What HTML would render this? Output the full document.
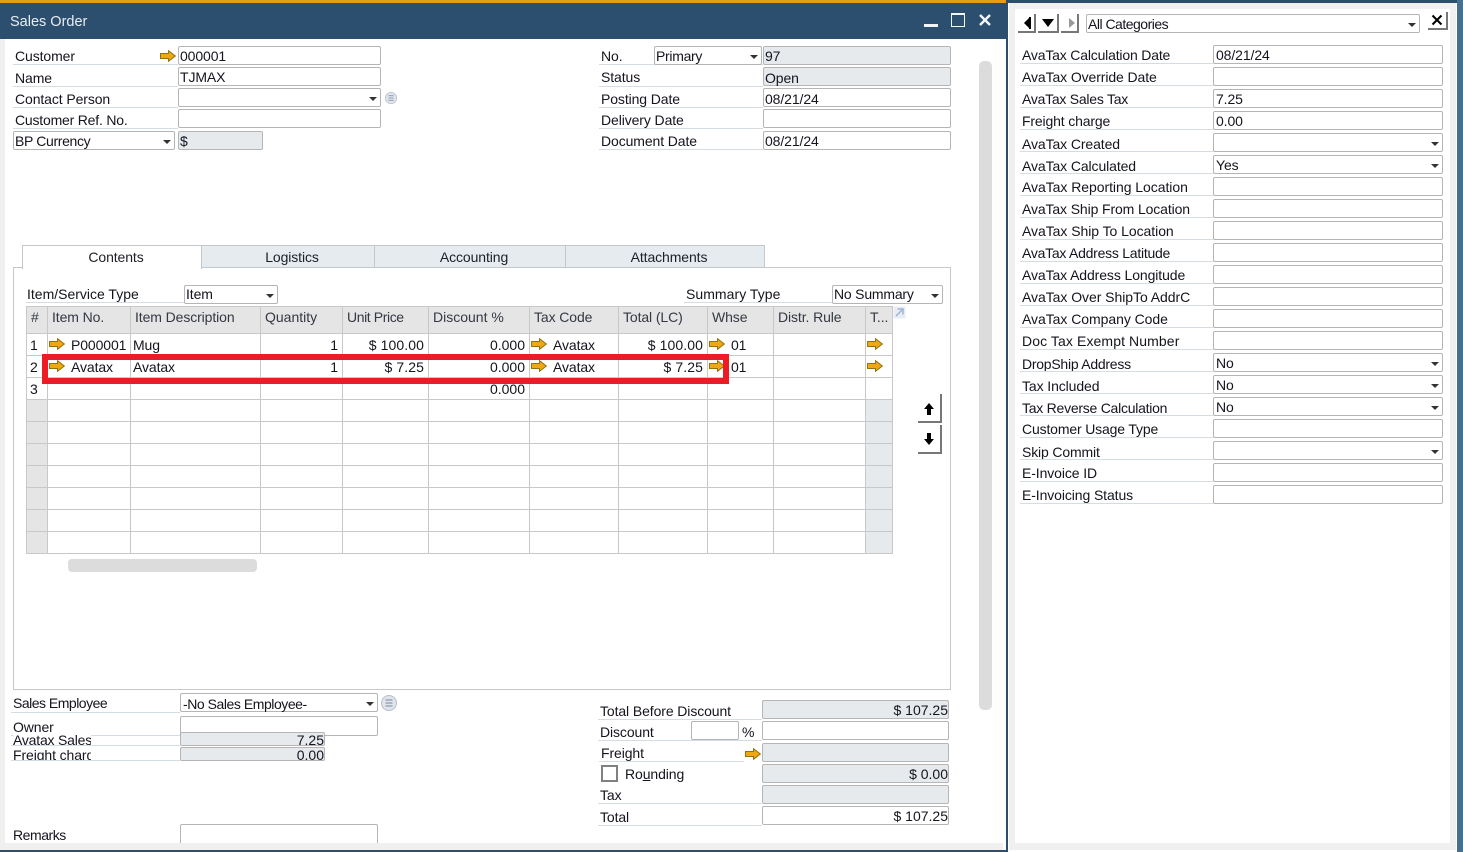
<!DOCTYPE html>
<html><head><meta charset="utf-8"><title>Sales Order</title>
<style>
html,body{margin:0;padding:0;width:1463px;height:852px;overflow:hidden;background:#fff}
body{position:relative;font:14px/16px "Liberation Sans",sans-serif;color:#14141e;letter-spacing:-.1px}
div,svg{position:absolute}
.t{white-space:nowrap}
.r{text-align:right;letter-spacing:0}
.f{border:1px solid #b5b5b5;border-radius:2px;box-sizing:border-box;background:#fff;height:19px;white-space:nowrap;padding:0 0 0 1px;line-height:18px}
.p{padding-left:2px}
.g{background:#e6eaed}
.ln{height:1px;background:#d5dde2}
.h{color:#333842;top:309px}
.dd:after{content:"";position:absolute;right:3px;top:8px;border:4px solid transparent;border-top:4px solid #333;border-bottom:0}
.v{width:1px;background:#c8c8c8;top:306px;height:248px}
.hl{height:1px;background:#c8c8c8;left:26px;width:867px}
.tab{top:245px;height:23px;box-sizing:border-box;border:1px solid #c4c8cc;border-left:0;background:#e6ebef;text-align:center;line-height:23px;color:#1e1e26;padding-left:8px}
.btn{background:#fff;border-right:2px solid #777;border-bottom:2px solid #777;box-sizing:border-box}
</style></head><body>
<svg width="0" height="0" style="left:0;top:0"><defs><symbol id="a" viewBox="0 0 16 12"><path d="M.5 3.500h8V.7L15.300 6 8.500 11.300V8.500H.5z" fill="#efa814" stroke="#94700f" stroke-width="1"/></symbol>
<symbol id="i" viewBox="0 0 16 16"><circle cx="8" cy="8" r="7.500" fill="#dfe5ee" stroke="#b8bec8"/><path d="M4.500 5h7M4.500 8h7M4.500 11h7" stroke="#7f8794" stroke-width="1"/></symbol></defs></svg>

<!-- chrome -->
<div style="left:0;top:0;width:1008px;height:852px;background:#f0f0f0"></div>
<div style="left:5px;top:39px;width:998px;height:804px;background:#fff"></div>
<div style="left:0;top:0;width:1008px;height:3px;background:#e2a010"></div>
<div style="left:0;top:3px;width:1008px;height:36px;background:#2d4f6f"></div>
<div class="t" style="left:10px;top:14px;color:#e8edf2;font-size:14.500px;letter-spacing:0;line-height:17px">Sales Order</div>
<div style="left:924px;top:24px;width:14px;height:3px;background:#f2f5f7"></div>
<div style="left:951px;top:13px;width:14px;height:14px;border:1px solid #f2f5f7;border-top-width:2px;box-sizing:border-box"></div>
<svg style="left:978px;top:13px" width="14" height="14" viewBox="0 0 14 14"><path d="M2 2l10 10M12 2L2 12" stroke="#f2f5f7" stroke-width="2.400"/></svg>
<div style="left:1003px;top:39px;width:3px;height:813px;background:#fff"></div>
<div style="left:1006px;top:0;width:2px;height:852px;background:#2d4f6f"></div>
<div style="left:0;top:850px;width:1008px;height:2px;background:#2d4f6f"></div>
<div style="left:979px;top:61px;width:13px;height:649px;background:#dcdcdc;border-radius:5px"></div>

<!-- top left header -->
<div class="t" style="left:15px;top:48px">Customer</div><div class="ln" style="left:13px;top:64px;width:165px"></div>
<svg style="left:160px;top:50px" width="16" height="12"><use href="#a"/></svg>
<div class="f" style="left:178px;top:46px;width:203px">000001</div>
<div class="t" style="left:15px;top:70px">Name</div><div class="ln" style="left:13px;top:86px;width:165px"></div>
<div class="f" style="left:178px;top:67px;width:203px">TJMAX</div>
<div class="t" style="left:15px;top:91px">Contact Person</div><div class="ln" style="left:13px;top:107px;width:165px"></div>
<div class="f dd" style="left:178px;top:88px;width:203px"></div>
<svg style="left:385px;top:92px" width="12" height="12"><use href="#i"/></svg>
<div class="t" style="left:15px;top:112px;letter-spacing:-.2px">Customer Ref. No.</div><div class="ln" style="left:13px;top:128px;width:165px"></div>
<div class="f" style="left:178px;top:109px;width:203px"></div>
<div class="f dd" style="left:13px;top:131px;width:162px;letter-spacing:-.35px">BP Currency</div>
<div class="f g" style="left:178px;top:131px;width:85px">$</div>

<div class="t" style="left:601px;top:48px">No.</div><div class="ln" style="left:599px;top:64px;width:164px"></div>
<div class="f dd" style="left:654px;top:46px;width:108px;letter-spacing:-.3px">Primary</div>
<div class="f g" style="left:763px;top:46px;width:188px">97</div>
<div class="t" style="left:601px;top:69px">Status</div><div class="ln" style="left:599px;top:86px;width:164px"></div>
<div class="f g" style="left:763px;top:67px;width:188px;line-height:20px">Open</div>
<div class="t" style="left:601px;top:91px">Posting Date</div><div class="ln" style="left:599px;top:107px;width:164px"></div>
<div class="f" style="left:763px;top:88px;width:188px;line-height:20px">08/21/24</div>
<div class="t" style="left:601px;top:112px">Delivery Date</div><div class="ln" style="left:599px;top:128px;width:164px"></div>
<div class="f" style="left:763px;top:109px;width:188px"></div>
<div class="t" style="left:601px;top:133px">Document Date</div><div class="ln" style="left:599px;top:149px;width:164px"></div>
<div class="f" style="left:763px;top:131px;width:188px">08/21/24</div>

<!-- tab panel -->
<div style="left:13px;top:267px;width:938px;height:423px;border:1px solid #c8c8c8;box-sizing:border-box"></div>
<div class="tab" style="left:22px;width:180px;background:#fff;border-left:1px solid #c4c8cc;border-bottom:0;height:24px">Contents</div>
<div class="tab" style="left:202px;width:173px">Logistics</div>
<div class="tab" style="left:375px;width:191px">Accounting</div>
<div class="tab" style="left:566px;width:199px">Attachments</div>

<div class="t" style="left:27px;top:286px;letter-spacing:0">Item/Service Type</div><div class="ln" style="left:26px;top:302px;width:158px"></div>
<div class="f dd" style="left:184px;top:285px;width:94px;line-height:16px">Item</div>
<div class="t" style="left:686px;top:286px;letter-spacing:.05px">Summary Type</div><div class="ln" style="left:684px;top:302px;width:148px"></div>
<div class="f dd" style="left:832px;top:285px;width:111px;line-height:17px;letter-spacing:-.2px">No Summary</div>

<!-- grid -->
<div style="left:26px;top:306px;width:867px;height:27px;background:#e5e5e5"></div>
<div style="left:27px;top:400px;width:20px;height:153px;background:#e5e5e5"></div>
<div style="left:866px;top:400px;width:26px;height:153px;background:#e6eaed"></div>
<div class="hl" style="top:306px"></div><div class="hl" style="top:333px"></div><div class="hl" style="top:355px"></div><div class="hl" style="top:377px"></div><div class="hl" style="top:399px"></div><div class="hl" style="top:421px"></div><div class="hl" style="top:443px"></div><div class="hl" style="top:465px"></div><div class="hl" style="top:487px"></div><div class="hl" style="top:509px"></div><div class="hl" style="top:531px"></div><div class="hl" style="top:553px"></div>
<div class="v" style="left:26px"></div><div class="v" style="left:47px"></div><div class="v" style="left:130px"></div><div class="v" style="left:260px"></div><div class="v" style="left:342px"></div><div class="v" style="left:428px"></div><div class="v" style="left:529px"></div><div class="v" style="left:618px"></div><div class="v" style="left:707px"></div><div class="v" style="left:773px"></div><div class="v" style="left:865px"></div><div class="v" style="left:892px"></div>

<div class="t h" style="left:31px">#</div><div class="t h" style="left:52px">Item No.</div><div class="t h" style="left:135px">Item Description</div><div class="t h" style="left:265px;letter-spacing:0">Quantity</div><div class="t h" style="left:347px;letter-spacing:-.4px">Unit Price</div><div class="t h" style="left:433px;letter-spacing:0">Discount %</div><div class="t h" style="left:534px">Tax Code</div><div class="t h" style="left:623px">Total (LC)</div><div class="t h" style="left:712px">Whse</div><div class="t h" style="left:778px">Distr. Rule</div><div class="t h" style="left:870px">T...</div>
<svg style="left:893px;top:306px" width="13" height="13" viewBox="0 0 13 13"><rect x=".5" y=".5" width="12" height="12" fill="#e8edf4"/><path d="M3 10l6-6M4.500 3H10v5.500" stroke="#9fb4d4" stroke-width="1.500" fill="none"/></svg>

<div class="t" style="left:30px;top:337px">1</div>
<svg style="left:49px;top:338px" width="16" height="12"><use href="#a"/></svg>
<div class="t" style="left:71px;top:337px">P000001</div><div class="t" style="left:133px;top:337px">Mug</div>
<div class="t r" style="left:262px;width:76px;top:337px">1</div><div class="t r" style="left:344px;width:80px;top:337px;letter-spacing:.1px">$ 100.00</div><div class="t r" style="left:430px;width:95px;top:337px">0.000</div>
<svg style="left:531px;top:338px" width="16" height="12"><use href="#a"/></svg><div class="t" style="left:553px;top:337px">Avatax</div>
<div class="t r" style="left:620px;width:83px;top:337px;letter-spacing:.1px">$ 100.00</div>
<svg style="left:709px;top:338px" width="16" height="12"><use href="#a"/></svg><div class="t" style="left:731px;top:337px">01</div>
<svg style="left:867px;top:338px" width="16" height="12"><use href="#a"/></svg>

<div class="t" style="left:30px;top:359px">2</div>
<svg style="left:49px;top:360px" width="16" height="12"><use href="#a"/></svg>
<div class="t" style="left:71px;top:359px">Avatax</div><div class="t" style="left:133px;top:359px">Avatax</div>
<div class="t r" style="left:262px;width:76px;top:359px">1</div><div class="t r" style="left:344px;width:80px;top:359px;letter-spacing:.1px">$ 7.25</div><div class="t r" style="left:430px;width:95px;top:359px">0.000</div>
<svg style="left:531px;top:360px" width="16" height="12"><use href="#a"/></svg><div class="t" style="left:553px;top:359px">Avatax</div>
<div class="t r" style="left:620px;width:83px;top:359px;letter-spacing:.1px">$ 7.25</div>
<svg style="left:709px;top:360px" width="16" height="12"><use href="#a"/></svg><div class="t" style="left:731px;top:359px">01</div>
<svg style="left:867px;top:360px" width="16" height="12"><use href="#a"/></svg>

<div class="t" style="left:30px;top:381px">3</div><div class="t r" style="left:430px;width:95px;top:381px">0.000</div>

<div style="left:42px;top:354px;width:687px;height:30px;border:6px solid #ed1c24;box-sizing:border-box"></div>

<div style="left:68px;top:559px;width:189px;height:13px;background:#dcdcdc;border-radius:4px"></div>

<div class="btn" style="left:918px;top:394px;width:24px;height:29px"></div>
<svg style="left:923px;top:402px" width="12" height="14" viewBox="0 0 12 14"><path d="M6 1l5 6H8v6H4V7H1z" fill="#000"/></svg>
<div class="btn" style="left:918px;top:425px;width:24px;height:29px"></div>
<svg style="left:923px;top:432px" width="12" height="14" viewBox="0 0 12 14"><path d="M4 1h4v6h3l-5 6-5-6h3z" fill="#000"/></svg>

<!-- bottom left -->
<div class="t" style="left:13px;top:695px;letter-spacing:-.5px">Sales Employee</div><div class="ln" style="left:11px;top:712px;width:169px"></div>
<div class="f dd" style="left:180px;top:693px;width:198px;line-height:20px;padding-left:2px;letter-spacing:-.45px">-No Sales Employee-</div>
<svg style="left:381px;top:695px" width="16" height="16"><use href="#i"/></svg>
<div class="t" style="left:13px;top:719px">Owner</div>
<div class="f" style="left:180px;top:716px;width:198px;height:20px"></div>
<div class="ln" style="left:11px;top:735px;width:169px"></div>
<div class="t" style="left:13px;top:732px;width:78px;height:16px;overflow:hidden;background:#fff;letter-spacing:-.2px">Avatax Sales</div>
<div class="ln" style="left:11px;top:745px;width:169px"></div>
<div class="f g r" style="left:180px;top:732px;width:145px;height:14px;line-height:15px;padding:0;overflow:hidden">7.25</div>
<div class="t" style="left:13px;top:747px;width:78px;height:13px;overflow:hidden">Freight charge</div>
<div class="ln" style="left:11px;top:760px;width:169px"></div>
<div class="f g r" style="left:180px;top:747px;width:145px;height:14px;line-height:14px;padding:0;overflow:hidden">0.00</div>
<div class="t" style="left:13px;top:827px;letter-spacing:-.45px">Remarks</div>
<div class="f" style="left:180px;top:824px;width:198px;height:19px;border-bottom:0;border-radius:2px 2px 0 0"></div>
<div style="left:0;top:843px;width:1003px;height:7px;background:#f0f0f0"></div>

<!-- totals -->
<div class="t" style="left:600px;top:703px">Total Before Discount</div><div class="ln" style="left:598px;top:719px;width:164px"></div>
<div class="f g r" style="left:762px;top:700px;width:187px;padding:0">$ 107.25</div>
<div class="t" style="left:600px;top:724px">Discount</div><div class="ln" style="left:598px;top:740px;width:164px"></div>
<div class="f" style="left:691px;top:721px;width:48px"></div>
<div class="t" style="left:742px;top:724px">%</div>
<div class="f" style="left:762px;top:721px;width:187px"></div>
<div class="t" style="left:601px;top:745px">Freight</div><div class="ln" style="left:599px;top:761px;width:145px"></div>
<svg style="left:745px;top:748px" width="16" height="12"><use href="#a"/></svg>
<div class="f g" style="left:762px;top:743px;width:187px"></div>
<div style="left:601px;top:765px;width:17px;height:17px;border:2px solid #808080;box-sizing:border-box;background:#fff"></div>
<div class="t" style="left:625px;top:766px">Ro<u>u</u>nding</div>
<div class="f g r" style="left:762px;top:764px;width:187px;padding:0">$ 0.00</div>
<div class="t" style="left:600px;top:787px">Tax</div><div class="ln" style="left:598px;top:803px;width:164px"></div>
<div class="f g" style="left:762px;top:785px;width:187px"></div>
<div class="t" style="left:600px;top:809px">Total</div><div class="ln" style="left:598px;top:825px;width:164px"></div>
<div class="f r" style="left:762px;top:806px;width:187px;padding:0">$ 107.25</div>

<!-- right panel -->
<div style="left:1008px;top:0;width:455px;height:852px;background:#fff"></div>
<div style="left:1008px;top:0;width:455px;height:3px;background:#2d4f6f"></div>
<div style="left:1457px;top:0;width:6px;height:852px;background:#47708f"></div>
<div style="left:1009px;top:3px;width:447px;height:847px;background:#f0f0f0"></div>
<div style="left:1015px;top:9px;width:435px;height:834px;background:#fff"></div>

<div class="btn" style="left:1018px;top:14px;width:18px;height:19px"></div>
<svg style="left:1022px;top:17px" width="10" height="12"><path d="M7 1v10L2 6z" fill="#000"/><rect x="7" y="0" width="2" height="12" fill="#000"/></svg>
<div class="btn" style="left:1038px;top:14px;width:21px;height:19px"></div>
<svg style="left:1041px;top:19px" width="14" height="8"><path d="M1 0h12L7 8z" fill="#000"/></svg>
<div class="btn" style="left:1061px;top:14px;width:18px;height:19px"></div>
<svg style="left:1068px;top:17px" width="8" height="12"><path d="M1 1v10l6-5z" fill="#999"/></svg>
<div class="f dd" style="left:1086px;top:14px;width:334px;line-height:19px;letter-spacing:-.5px">All Categories</div>
<div class="btn" style="left:1428px;top:12px;width:20px;height:18px"></div>
<svg style="left:1431px;top:14px" width="12" height="12" viewBox="0 0 12 12"><path d="M1.500 1.500l9 9M10.500 1.500l-9 9" stroke="#000" stroke-width="2"/></svg>

<div class="t" style="left:1022px;top:47px;letter-spacing:-.18px">AvaTax Calculation Date</div><div class="f p" style="left:1213px;top:45px;width:230px">08/21/24</div><div class="ln" style="left:1020px;top:63px;width:193px"></div>
<div class="t" style="left:1022px;top:69px">AvaTax Override Date</div><div class="f" style="left:1213px;top:67px;width:230px"></div><div class="ln" style="left:1020px;top:85px;width:193px"></div>
<div class="t" style="left:1022px;top:91px;letter-spacing:-.25px">AvaTax Sales Tax</div><div class="f p" style="left:1213px;top:89px;width:230px">7.25</div><div class="ln" style="left:1020px;top:107px;width:193px"></div>
<div class="t" style="left:1022px;top:113px;letter-spacing:-.15px">Freight charge</div><div class="f p" style="left:1213px;top:111px;width:230px">0.00</div><div class="ln" style="left:1020px;top:129px;width:193px"></div>
<div class="t" style="left:1022px;top:136px">AvaTax Created</div><div class="f dd" style="left:1213px;top:133px;width:230px"></div><div class="ln" style="left:1020px;top:151px;width:193px"></div>
<div class="t" style="left:1022px;top:158px">AvaTax Calculated</div><div class="f dd p" style="left:1213px;top:155px;width:230px">Yes</div><div class="ln" style="left:1020px;top:173px;width:193px"></div>
<div class="t" style="left:1022px;top:179px;letter-spacing:-.05px">AvaTax Reporting Location</div><div class="f" style="left:1213px;top:177px;width:230px"></div><div class="ln" style="left:1020px;top:195px;width:193px"></div>
<div class="t" style="left:1022px;top:201px;letter-spacing:-.12px">AvaTax Ship From Location</div><div class="f" style="left:1213px;top:199px;width:230px"></div><div class="ln" style="left:1020px;top:217px;width:193px"></div>
<div class="t" style="left:1022px;top:223px;letter-spacing:-.05px">AvaTax Ship To Location</div><div class="f" style="left:1213px;top:221px;width:230px"></div><div class="ln" style="left:1020px;top:239px;width:193px"></div>
<div class="t" style="left:1022px;top:245px;letter-spacing:-.25px">AvaTax Address Latitude</div><div class="f" style="left:1213px;top:243px;width:230px"></div><div class="ln" style="left:1020px;top:261px;width:193px"></div>
<div class="t" style="left:1022px;top:267px">AvaTax Address Longitude</div><div class="f" style="left:1213px;top:265px;width:230px"></div><div class="ln" style="left:1020px;top:283px;width:193px"></div>
<div class="t" style="left:1022px;top:289px;letter-spacing:-.05px">AvaTax Over ShipTo AddrC</div><div class="f" style="left:1213px;top:287px;width:230px"></div><div class="ln" style="left:1020px;top:305px;width:193px"></div>
<div class="t" style="left:1022px;top:311px;letter-spacing:-.05px">AvaTax Company Code</div><div class="f" style="left:1213px;top:309px;width:230px"></div><div class="ln" style="left:1020px;top:327px;width:193px"></div>
<div class="t" style="left:1022px;top:333px;letter-spacing:.1px">Doc Tax Exempt Number</div><div class="f" style="left:1213px;top:331px;width:230px"></div><div class="ln" style="left:1020px;top:349px;width:193px"></div>
<div class="t" style="left:1022px;top:356px;letter-spacing:-.25px">DropShip Address</div><div class="f dd p" style="left:1213px;top:353px;width:230px">No</div><div class="ln" style="left:1020px;top:371px;width:193px"></div>
<div class="t" style="left:1022px;top:378px">Tax Included</div><div class="f dd p" style="left:1213px;top:375px;width:230px">No</div><div class="ln" style="left:1020px;top:393px;width:193px"></div>
<div class="t" style="left:1022px;top:400px;letter-spacing:-.25px">Tax Reverse Calculation</div><div class="f dd p" style="left:1213px;top:397px;width:230px">No</div><div class="ln" style="left:1020px;top:415px;width:193px"></div>
<div class="t" style="left:1022px;top:421px;letter-spacing:-.15px">Customer Usage Type</div><div class="f" style="left:1213px;top:419px;width:230px"></div><div class="ln" style="left:1020px;top:437px;width:193px"></div>
<div class="t" style="left:1022px;top:444px;letter-spacing:-.15px">Skip Commit</div><div class="f dd" style="left:1213px;top:441px;width:230px"></div><div class="ln" style="left:1020px;top:459px;width:193px"></div>
<div class="t" style="left:1022px;top:465px">E-Invoice ID</div><div class="f" style="left:1213px;top:463px;width:230px"></div><div class="ln" style="left:1020px;top:481px;width:193px"></div>
<div class="t" style="left:1022px;top:487px">E-Invoicing Status</div><div class="f" style="left:1213px;top:485px;width:230px"></div><div class="ln" style="left:1020px;top:503px;width:193px"></div>
</body></html>
